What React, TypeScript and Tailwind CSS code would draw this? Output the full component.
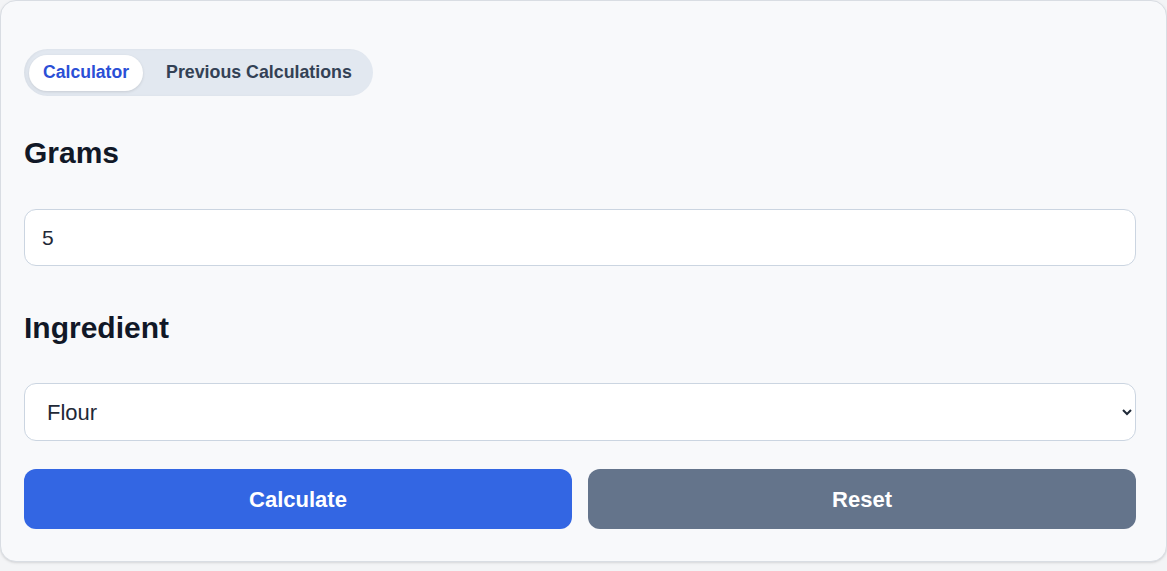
import { useState } from 'react';

const App = () => {
  const [tab, setTab] = useState('calc');
  const [grams, setGrams] = useState('5');
  const [ingredient, setIngredient] = useState('Flour');

  return (
    <div className="min-h-screen bg-[#f3f4f6] font-['Liberation_Sans',Arial,sans-serif]">
      <div className="bg-[#f8f9fb] border border-[#d9dde3] rounded-2xl shadow-sm pl-[23px] pr-[30px] pt-12 pb-8">
        <div className="inline-flex items-center gap-[9px] h-[47px] bg-[#e2e8f0] rounded-full pl-[5px] pr-[7px] shadow-[inset_2px_0_3px_rgba(0,0,0,0.04)]">
          <button
            onClick={() => setTab('calc')}
            className={`h-9 px-3.5 rounded-full text-[17.6px] font-bold ${
              tab === 'calc' ? 'bg-white text-[#2b4fd6] shadow-[0_1px_3px_rgba(0,0,0,0.12)]' : 'text-[#334155]'
            }`}
          >
            Calculator
          </button>
          <button
            onClick={() => setTab('prev')}
            className={`h-9 px-3.5 rounded-full text-[17.8px] font-bold ${
              tab === 'prev' ? 'bg-white text-[#2b4fd6] shadow-[0_1px_3px_rgba(0,0,0,0.12)]' : 'text-[#334155]'
            }`}
          >
            Previous Calculations
          </button>
        </div>

        <h2 className="mt-[39px] text-3xl font-bold text-[#111827]">Grams</h2>
        <input
          type="number"
          value={grams}
          onChange={(e) => setGrams(e.target.value)}
          className="mt-[38px] block w-full h-[57px] px-[17px] bg-white border border-[#cbd5e1] rounded-xl text-[21px] text-[#1f2937] outline-none"
        />

        <h2 className="mt-[44px] text-3xl font-bold text-[#111827]">Ingredient</h2>
        <select
          value={ingredient}
          onChange={(e) => setIngredient(e.target.value)}
          className="mt-[37px] block w-full h-[58px] pl-[18px] pr-2 bg-white border border-[#cbd5e1] rounded-xl text-[22px] text-[#1f2937] outline-none"
        >
          <option>Flour</option>
          <option>Sugar</option>
          <option>Butter</option>
          <option>Milk</option>
        </select>

        <div className="mt-7 grid grid-cols-2 gap-4">
          <button className="h-[60px] rounded-xl bg-[#3366e3] text-white text-[22px] font-bold">Calculate</button>
          <button className="h-[60px] rounded-xl bg-[#64748b] text-white text-[22px] font-bold">Reset</button>
        </div>
      </div>
    </div>
  );
};

export default App;
